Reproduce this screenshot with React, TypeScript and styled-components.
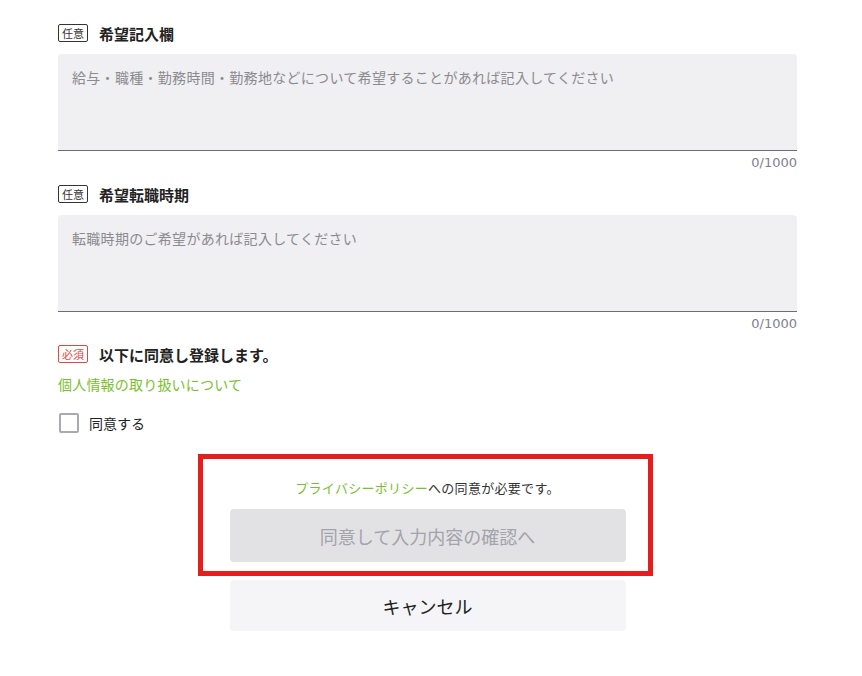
import React from 'react';
import styled, { createGlobalStyle } from 'styled-components';

const GlobalStyle = createGlobalStyle`
  body {
    margin: 0;
    background: #fff;
    font-family: 'Noto Sans CJK JP', 'Noto Sans', sans-serif;
    color: #222;
  }
`;

const App = () => {
  return (
    <Page>
      <GlobalStyle />
      <Form>
        <Field>
          <LabelRow>
            <Badge>任意</Badge>
            <LabelText>希望記入欄</LabelText>
          </LabelRow>
          <TextArea placeholder="給与・職種・勤務時間・勤務地などについて希望することがあれば記入してください" />
          <Counter>0/1000</Counter>
        </Field>
        <Field>
          <LabelRow>
            <Badge>任意</Badge>
            <LabelText>希望転職時期</LabelText>
          </LabelRow>
          <TextArea placeholder="転職時期のご希望があれば記入してください" />
          <Counter>0/1000</Counter>
        </Field>
        <Agreement>
          <LabelRow>
            <Badge required>必須</Badge>
            <LabelText>以下に同意し登録します。</LabelText>
          </LabelRow>
          <Link href="#">個人情報の取り扱いについて</Link>
          <CheckLabel>
            <CheckBox type="checkbox" />
            同意する
          </CheckLabel>
        </Agreement>
        <Actions>
          <SubmitArea>
            <Highlight />
            <Notice>
              <Link href="#">プライバシーポリシー</Link>への同意が必要です。
            </Notice>
            <Button disabled>同意して入力内容の確認へ</Button>
          </SubmitArea>
          <Button secondary>キャンセル</Button>
        </Actions>
      </Form>
    </Page>
  );
};

const Page = styled.div`
  padding: 18px 0 40px 58px;
`;
const Form = styled.div`
  width: 739px;
  display: flex;
  flex-direction: column;
`;
const Field = styled.div`
  display: flex;
  flex-direction: column;
  margin-bottom: 8px;
`;
const LabelRow = styled.div`
  display: flex;
  align-items: center;
  gap: 11px;
  height: 30px;
  margin-bottom: 6px;
`;
const Badge = styled.span<{ required?: boolean }>`
  font-size: 11px;
  line-height: 14px;
  padding: 1px 3px;
  border: 1px solid ${(p) => (p.required ? '#e6463c' : '#333')};
  color: ${(p) => (p.required ? '#e6463c' : '#333')};
  border-radius: 2px;
`;
const LabelText = styled.span`
  font-size: 15px;
  font-weight: 700;
  color: #222;
`;
const TextArea = styled.textarea`
  box-sizing: border-box;
  width: 100%;
  height: 97px;
  resize: none;
  border: none;
  border-bottom: 1px solid #6e6a7c;
  border-radius: 4px 4px 0 0;
  background: #f0f0f2;
  padding: 12px 14px;
  font-family: inherit;
  font-size: 14px;
  line-height: 22px;
  letter-spacing: 0.3px;
  color: #222;
  outline: none;
  &::placeholder {
    color: #8a8a90;
  }
`;
const Counter = styled.div`
  text-align: right;
  font-size: 13px;
  line-height: 16px;
  margin-top: 4px;
  color: #80808f;
  font-family: 'DejaVu Sans', 'Noto Sans CJK JP', sans-serif;
`;
const Agreement = styled.div`
  display: flex;
  flex-direction: column;
  margin-top: -1px;
`;
const Link = styled.a`
  color: #7ac02c;
  text-decoration: none;
  font-size: inherit;
  ${Agreement} > & {
    font-size: 14px;
    line-height: 22px;
    letter-spacing: 0.2px;
    margin-top: -2px;
  }
`;
const CheckLabel = styled.label`
  display: flex;
  align-items: center;
  gap: 10px;
  margin-top: 18px;
  font-size: 14px;
  color: #222;
`;
const CheckBox = styled.input`
  appearance: none;
  margin: 0 0 0 1px;
  width: 20px;
  height: 20px;
  box-sizing: border-box;
  border: 2px solid #aaa9b2;
  border-radius: 2px;
  background: #fff;
`;
const Actions = styled.div`
  display: flex;
  flex-direction: column;
  align-items: center;
  gap: 18px;
  margin-top: 21px;
`;
const SubmitArea = styled.div`
  position: relative;
  display: flex;
  flex-direction: column;
  align-items: center;
  padding-top: 25px;
`;
const Highlight = styled.div`
  position: absolute;
  top: 0;
  left: -32px;
  right: -27px;
  bottom: -14px;
  border: 5px solid #e41d1d;
  pointer-events: none;
`;
const Notice = styled.p`
  margin: 0 0 12px;
  font-size: 13px;
  line-height: 18px;
  letter-spacing: 0.3px;
  color: #333;
`;
const Button = styled.button<{ secondary?: boolean }>`
  width: 396px;
  height: ${(p) => (p.secondary ? '51px' : '53px')};
  border: none;
  border-radius: 4px;
  font-family: inherit;
  font-size: 18px;
  background: ${(p) => (p.secondary ? '#f5f5f7' : '#e2e2e5')};
  color: ${(p) => (p.secondary ? '#222' : '#a3a3ab')};
  cursor: pointer;
  &:disabled {
    cursor: default;
  }
`;

export default App;
